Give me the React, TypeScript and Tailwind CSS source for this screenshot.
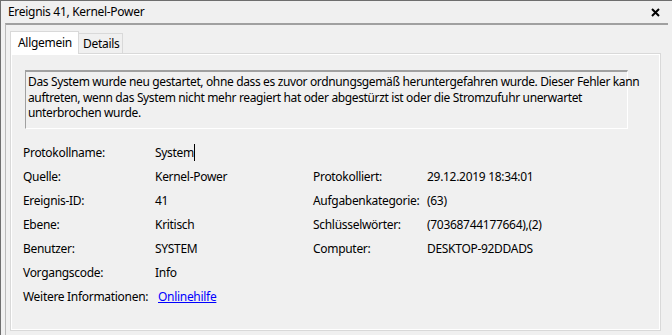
import React from "react";

const F = "font-['Segoe_UI','Noto_Sans',sans-serif]";

function Row({ label, value, rLabel, rValue }: { label: React.ReactNode; value: React.ReactNode; rLabel?: string; rValue?: string }) {
  return (
    <div className="flex h-[24px] items-center">
      <div className="w-[132px] shrink-0 whitespace-nowrap">{label}</div>
      <div className="w-[158px] shrink-0 whitespace-nowrap">{value}</div>
      {rLabel ? <div className="w-[114px] shrink-0 whitespace-nowrap">{rLabel}</div> : null}
      {rValue ? <div className="whitespace-nowrap">{rValue}</div> : null}
    </div>
  );
}

export default function App() {
  return (
    <div className={`w-[672px] h-[335px] overflow-hidden bg-[#f0f0f0] border-t border-l border-[#6e6e6e] text-[12px] tracking-[-0.3px] text-black ${F}`}>
      <div className="flex h-[22px] items-center justify-between pl-[7px] pr-[12px]">
        <span className="whitespace-nowrap">Ereignis 41, Kernel-Power</span>
        <svg width="9" height="9" viewBox="0 0 9 9" className="mt-[1px]">
          <path d="M1 1 L8 8 M8 1 L1 8" stroke="#000" strokeWidth="2" />
        </svg>
      </div>
      <div className="ml-[4px] w-[663px] h-[320px] border-t-2 border-l border-t-[#a0a0a0] border-l-[#b9b9b9] pl-[4px] pt-[6px]">
        <div className="flex items-end h-[22px]">
          <div className="h-[23px] w-[69px] -mb-[1px] relative z-10 bg-white border border-b-0 border-[#d9d9d9] pl-[7px] pt-[2px] whitespace-nowrap">
            Allgemein
          </div>
          <div className="h-[20px] w-[44px] bg-[#f0f0f0] border border-l-0 border-b-0 border-[#d9d9d9] pl-[4px] pt-[1px] whitespace-nowrap">
            Details
          </div>
        </div>
        <div className="w-[651px] h-[278px] border border-[#d9d9d9] shadow-[inset_1px_1px_0_#ffffff,inset_-1px_-1px_0_#ffffff] pl-[14px] pt-[16px]">
          <div className="w-[603px] h-[59px] border-t-2 border-l border-t-[#a0a0a0] border-l-[#a0a0a0] border-r border-b border-r-white border-b-white pl-[2px] pt-[2px] leading-[15.5px] tracking-[-0.36px] text-[#000]">
            <div className="whitespace-nowrap">Das System wurde neu gestartet, ohne dass es zuvor ordnungsgemäß heruntergefahren wurde. Dieser Fehler kann</div>
            <div className="whitespace-nowrap">auftreten, wenn das System nicht mehr reagiert hat oder abgestürzt ist oder die Stromzufuhr unerwartet</div>
            <div className="whitespace-nowrap">unterbrochen wurde.</div>
          </div>
          <div className="mt-[12px] -ml-[2px]">
            <Row label="Protokollname:" value={<span className="border-r border-black pr-[0px]">System</span>} />
            <Row label="Quelle:" value="Kernel-Power" rLabel="Protokolliert:" rValue="29.12.2019 18:34:01" />
            <Row label="Ereignis-ID:" value="41" rLabel="Aufgabenkategorie:" rValue="(63)" />
            <Row label="Ebene:" value="Kritisch" rLabel="Schlüsselwörter:" rValue="(70368744177664),(2)" />
            <Row label="Benutzer:" value="SYSTEM" rLabel="Computer:" rValue="DESKTOP-92DDADS" />
            <Row label="Vorgangscode:" value="Info" />
            <Row label="Weitere Informationen:" value={<span className="ml-[3px] text-[#0000ff] underline">Onlinehilfe</span>} />
          </div>
        </div>
      </div>
    </div>
  );
}
